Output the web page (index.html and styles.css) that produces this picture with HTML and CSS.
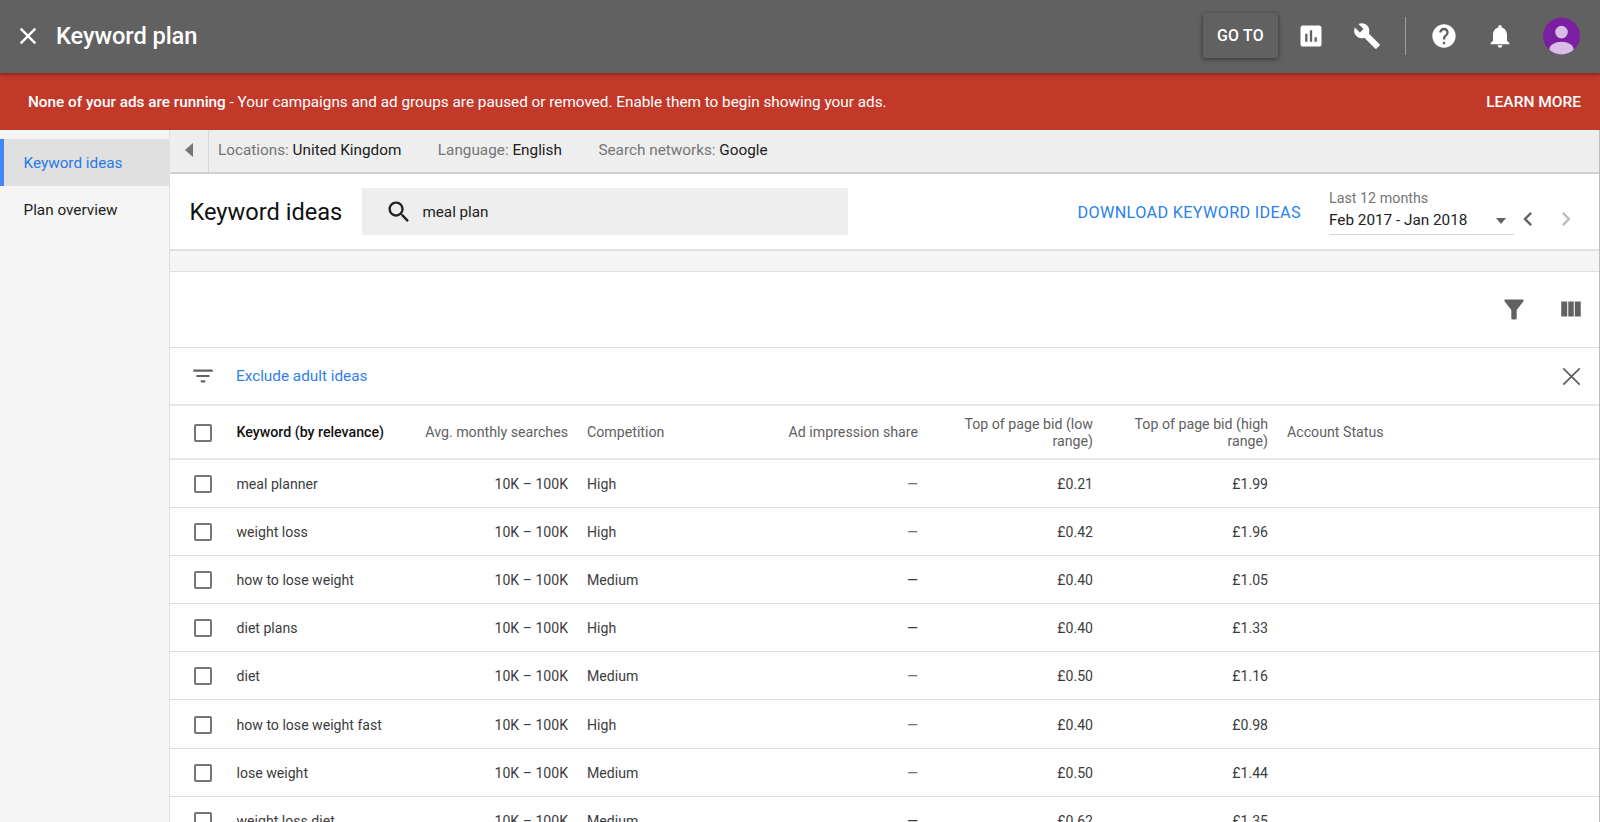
FILE: index.html
```html
<!DOCTYPE html>
<html lang="en">
<head>
<meta charset="utf-8">
<title>Keyword plan</title>
<link rel="stylesheet" href="styles.css">
</head>
<body>
<header class="topbar">
  <svg class="ico close-main" viewBox="0 0 24 24"><path d="M19 6.41L17.59 5 12 10.59 6.41 5 5 6.41 10.59 12 5 17.59 6.41 19 12 13.41 17.59 19 19 17.59 13.41 12z"/></svg>
  <h1 class="app-title">Keyword plan</h1>
  <div class="top-actions">
    <button class="goto">GO TO</button>
    <span class="top-btn"><svg class="ico" viewBox="0 0 24 24"><path d="M19 3H5c-1.1 0-2 .9-2 2v14c0 1.1.9 2 2 2h14c1.1 0 2-.9 2-2V5c0-1.1-.9-2-2-2zM9 17H7v-7h2v7zm4 0h-2V7h2v10zm4 0h-2v-4h2v4z"/></svg></span>
    <span class="top-btn"><svg class="ico" viewBox="0 0 24 24"><path d="M22.7 19l-9.1-9.1c.9-2.3.4-5-1.5-6.9-2-2-5-2.4-7.4-1.3L9 6 6 9 1.6 4.7C.4 7.1.9 10.1 2.9 12.1c1.9 1.9 4.6 2.4 6.9 1.5l9.1 9.1c.4.4 1 .4 1.4 0l2.3-2.3c.5-.4.5-1.1.1-1.4z"/></svg></span>
    <span class="top-divider"></span>
    <span class="top-btn"><svg class="ico" viewBox="0 0 24 24"><path d="M12 2C6.48 2 2 6.48 2 12s4.48 10 10 10 10-4.48 10-10S17.52 2 12 2zm1 17h-2v-2h2v2zm2.07-7.75l-.9.92C13.45 12.9 13 13.5 13 15h-2v-.5c0-1.1.45-2.1 1.17-2.83l1.24-1.26c.37-.36.59-.86.59-1.41 0-1.1-.9-2-2-2s-2 .9-2 2H8c0-2.21 1.79-4 4-4s4 1.79 4 4c0 .88-.36 1.68-.93 2.25z"/></svg></span>
    <span class="top-btn"><svg class="ico" viewBox="0 0 24 24"><path d="M12 22c1.1 0 2-.9 2-2h-4c0 1.1.89 2 2 2zm6-6v-5c0-3.07-1.64-5.64-4.5-6.32V4c0-.83-.67-1.5-1.5-1.5s-1.5.67-1.5 1.5v.68C7.63 5.36 6 7.92 6 11v5l-2 2v1h16v-1l-2-2z"/></svg></span>
    <svg class="avatar" viewBox="0 0 38 38"><defs><clipPath id="av"><circle cx="19" cy="19" r="19"/></clipPath></defs><circle cx="19" cy="19" r="19" fill="#7b1fa2"/><g clip-path="url(#av)" fill="#d9bde6"><circle cx="19" cy="15" r="6.5"/><ellipse cx="19" cy="33" rx="12.5" ry="8"/></g></svg>
  </div>
</header>
<div class="alert">
  <p class="alert-text"><strong>None of your ads are running</strong> - Your campaigns and ad groups are paused or removed. Enable them to begin showing your ads.</p>
  <span class="alert-link">LEARN MORE</span>
</div>
<div class="main">
  <nav class="sidebar">
    <a class="nav-item active">Keyword ideas</a>
    <a class="nav-item">Plan overview</a>
  </nav>
  <section class="content">
    <div class="context">
      <span class="collapse"><svg class="tri" viewBox="0 0 8 14"><path d="M8 0v14L0 7z"/></svg></span>
      <span class="ctx"><span class="ctx-label">Locations:</span> United Kingdom</span>
      <span class="ctx"><span class="ctx-label">Language:</span> English</span>
      <span class="ctx"><span class="ctx-label">Search networks:</span> Google</span>
    </div>
    <div class="title-band">
      <h2 class="page-title">Keyword ideas</h2>
      <div class="search">
        <svg class="search-ico" viewBox="0 0 24 24"><path d="M15.5 14h-.79l-.28-.27C15.41 12.59 16 11.11 16 9.5 16 5.91 13.09 3 9.5 3S3 5.91 3 9.5 5.91 16 9.5 16c1.61 0 3.09-.59 4.23-1.57l.27.28v.79l5 4.99L20.49 19l-4.99-5zm-6 0C7.01 14 5 11.99 5 9.5S7.01 5 9.5 5 14 7.01 14 9.5 11.99 14 9.5 14z"/></svg>
        <span>meal plan</span>
      </div>
      <a class="download">DOWNLOAD KEYWORD IDEAS</a>
      <div class="date">
        <span class="date-label">Last 12 months</span>
        <span class="date-value">Feb 2017 - Jan 2018<i class="caret"></i></span>
      </div>
      <svg class="chev" viewBox="0 0 24 24"><path d="M15.41 7.41L14 6l-6 6 6 6 1.41-1.41L10.83 12z"/></svg>
      <svg class="chev off" viewBox="0 0 24 24"><path d="M10 6L8.59 7.41 13.17 12l-4.58 4.59L10 18l6-6z"/></svg>
    </div>
    <div class="spacer"></div>
    <div class="toolbar">
      <svg class="tool funnel" viewBox="0 0 24 24"><path d="M2.500 2.500h19v1.800L14.700 13v8.300c0 .7-.5 1.200-1.200 1.200h-3c-.7 0-1.200-.5-1.200-1.200V13L2.500 4.300z"/></svg>
      <svg class="tool" viewBox="0 0 24 24"><path d="M9.500 19h5V5h-5zM3 19h5.500V5H3zM15.500 5v14H21V5z"/></svg>
    </div>
    <div class="filter-row">
      <svg class="filter-ico" viewBox="0 0 24 24"><path d="M10 18h4v-2h-4v2zM3 6v2h18V6H3zm3 7h12v-2H6v2z"/></svg>
      <a class="filter-link">Exclude adult ideas</a>
      <svg class="filter-x" viewBox="0 0 24 24"><path d="M20.500 4.700L19.300 3.500 12 10.800 4.700 3.500 3.500 4.700 10.800 12 3.500 19.300 4.700 20.500 12 13.200 19.300 20.500 20.500 19.300 13.200 12z"/></svg>
    </div>
    <div class="table">
      <div class="row head">
        <span class="cb"></span>
        <span class="kw-head">Keyword (by relevance)</span>
        <span class="num">Avg. monthly searches</span>
        <span>Competition</span>
        <span class="num">Ad impression share</span>
        <span class="num">Top of page bid (low range)</span>
        <span class="num">Top of page bid (high range)</span>
        <span>Account Status</span>
      </div>
      <div class="row"><span class="cb"></span><span>meal planner</span><span class="num">10K – 100K</span><span>High</span><span class="num dash">—</span><span class="num">£0.21</span><span class="num">£1.99</span><span></span></div>
      <div class="row"><span class="cb"></span><span>weight loss</span><span class="num">10K – 100K</span><span>High</span><span class="num dash">—</span><span class="num">£0.42</span><span class="num">£1.96</span><span></span></div>
      <div class="row"><span class="cb"></span><span>how to lose weight</span><span class="num">10K – 100K</span><span>Medium</span><span class="num">—</span><span class="num">£0.40</span><span class="num">£1.05</span><span></span></div>
      <div class="row"><span class="cb"></span><span>diet plans</span><span class="num">10K – 100K</span><span>High</span><span class="num">—</span><span class="num">£0.40</span><span class="num">£1.33</span><span></span></div>
      <div class="row"><span class="cb"></span><span>diet</span><span class="num">10K – 100K</span><span>Medium</span><span class="num dash">—</span><span class="num">£0.50</span><span class="num">£1.16</span><span></span></div>
      <div class="row"><span class="cb"></span><span>how to lose weight fast</span><span class="num">10K – 100K</span><span>High</span><span class="num dash">—</span><span class="num">£0.40</span><span class="num">£0.98</span><span></span></div>
      <div class="row"><span class="cb"></span><span>lose weight</span><span class="num">10K – 100K</span><span>Medium</span><span class="num dash">—</span><span class="num">£0.50</span><span class="num">£1.44</span><span></span></div>
      <div class="row"><span class="cb"></span><span>weight loss diet</span><span class="num">10K – 100K</span><span>Medium</span><span class="num">—</span><span class="num">£0.62</span><span class="num">£1.35</span><span></span></div>
    </div>
  </section>
</div>
</body>
</html>
```
FILE: styles.css
```css
* { box-sizing: border-box; }
html, body { margin: 0; height: 822px; overflow: hidden; }
body { font-family: Roboto, "Liberation Sans", sans-serif; font-size: 14px; color: #212121; background: #f5f5f5; display: flex; flex-direction: column; }
svg { display: block; flex: none; }
h1, h2, p { margin: 0; font-weight: 400; }

.topbar { height: 73px; flex: none; display: flex; align-items: center; background: #616161; color: #fff; padding: 0 0 2px 14px; position: relative; z-index: 2; box-shadow: 0 1px 3px rgba(0,0,0,.45); }
.ico { width: 28px; height: 28px; fill: #fff; }
.close-main { width: 28px; height: 28px; }
.app-title { font-size: 23.700px; font-weight: 500; margin-left: 14px; letter-spacing: -.1px; }
.top-actions { margin-left: auto; display: flex; align-items: center; padding-right: 20px; }
.goto { width: 75px; height: 45px; border: 0; border-radius: 2px; background: #616161; color: #fff; font: 500 15.800px Roboto, sans-serif; letter-spacing: .3px; box-shadow: 0 1px 4px rgba(0,0,0,.5); margin-right: 5px; }
.top-btn { width: 56px; height: 38px; display: flex; align-items: center; justify-content: center; }
.top-divider { width: 1px; height: 38px; background: #9e9e9e; margin: 0 10px; }
.avatar { width: 37px; height: 38px; margin-left: 15px; }

.alert { height: 57px; flex: none; display: flex; align-items: center; justify-content: space-between; background: #c2392a; color: #fff; padding: 0 19px 0 28px; font-size: 15.300px; }
.alert strong { font-weight: 500; }
.alert-link { font-weight: 500; font-size: 15.500px; }

.main { flex: 1; display: flex; min-height: 0; }
.sidebar { width: 170px; flex: none; padding-top: 9px; border-right: 1px solid #e0e0e0; background: #f5f5f5; }
.nav-item { display: flex; align-items: center; height: 47px; padding: 0 0 0 23.500px; font-size: 15.300px; color: #212121; }
.active { background: #e0e0e0; color: #2979e8; border-left: 4px solid #4285f4; padding-left: 19.500px; }

.content { flex: 1; min-width: 0; display: flex; flex-direction: column; background: #fff; border-right: 1px solid #bdbdbd; }
.context { height: 44px; flex: none; display: flex; align-items: center; background: #eee; border-bottom: 2px solid #d0d0d0; padding-bottom: 2px; font-size: 15.300px; color: #212121; }
.collapse { width: 39px; align-self: stretch; margin-bottom: -2px; padding-bottom: 2px; display: flex; align-items: center; justify-content: center; border-right: 1px solid #d8d8d8; margin-right: 9px; }
.tri { width: 8px; height: 14px; fill: #757575; }
.ctx { margin-right: 36.500px; }
.ctx-label { color: #757575; }

.title-band { height: 77px; flex: none; display: flex; align-items: center; padding: 0 19px 1px 19.500px; border-bottom: 2px solid #e0e0e0; }
.page-title { font-size: 23.600px; font-weight: 400; color: #111; width: 172px; flex: none; padding-top: 2px; }
.search { width: 486px; height: 47px; display: flex; align-items: center; background: #eee; padding: 1px 0 0 23px; font-size: 15.200px; }
.search-ico { width: 28px; height: 28px; fill: #212121; margin-right: 10px; }
.download { margin-left: auto; color: #2a7ff0; font-size: 16.200px; letter-spacing: .35px; margin-right: 28px; padding-top: 2px; }
.date { width: 185px; display: flex; flex-direction: column; }
.date-label { color: #757575; font-size: 14.300px; line-height: 17px; margin-top: 3px; }
.date-value { position: relative; font-size: 15.300px; line-height: 19px; padding: 3px 0 4px; border-bottom: 1px solid #d5d5d5; margin-top: 1px; }
.caret { position: absolute; right: 8px; top: 10px; border: 5.500px solid transparent; border-top: 6px solid #616161; border-bottom: 0; }
.chev { width: 28px; height: 28px; fill: #616161; margin-top: 16px; }
.chev.off { fill: #bdbdbd; margin-left: 10px; }

.spacer { height: 21px; flex: none; background: #f5f5f5; border-bottom: 1px solid #e0e0e0; }
.toolbar { height: 76px; flex: none; display: flex; align-items: center; justify-content: flex-end; gap: 32px; padding: 0 15px 1px; border-bottom: 1px solid #e0e0e0; }
.tool { width: 26px; height: 26px; fill: #616161; }
.funnel { width: 24px; height: 24px; }
.filter-row { height: 58px; flex: none; display: flex; align-items: center; padding: 0 15px 0 20px; border-bottom: 2px solid #e8e8e8; }
.filter-ico { width: 26px; height: 26px; fill: #616161; margin-right: 20px; }
.filter-link { color: #2f80ed; font-size: 15.300px; }
.filter-x { width: 25px; height: 25px; fill: #616161; margin-left: auto; }

.row { display: grid; grid-template-columns: 47.500px 149.500px 163px 160px 152px 156px 156px 1fr; column-gap: 19px; align-items: center; height: 48.200px; padding-top: 1px; border-bottom: 1px solid #e0e0e0; font-size: 14.100px; color: #3c3c3c; flex: none; }
.row > span { min-width: 0; }
.head { height: 53.500px; padding-top: 2px; border-bottom-width: 2px; border-bottom-color: #e8e8e8; color: #616161; font-weight: 400; font-size: 14.200px; line-height: 17px; }
.kw-head { color: #111; white-space: nowrap; font-weight: 500; font-size: 14.200px; }
.num { text-align: right; }
.dash { color: #757575; }
.cb { display: block; width: 18px; height: 18px; margin-left: 24px; border: 2px solid #757575; border-radius: 2px; }
```
